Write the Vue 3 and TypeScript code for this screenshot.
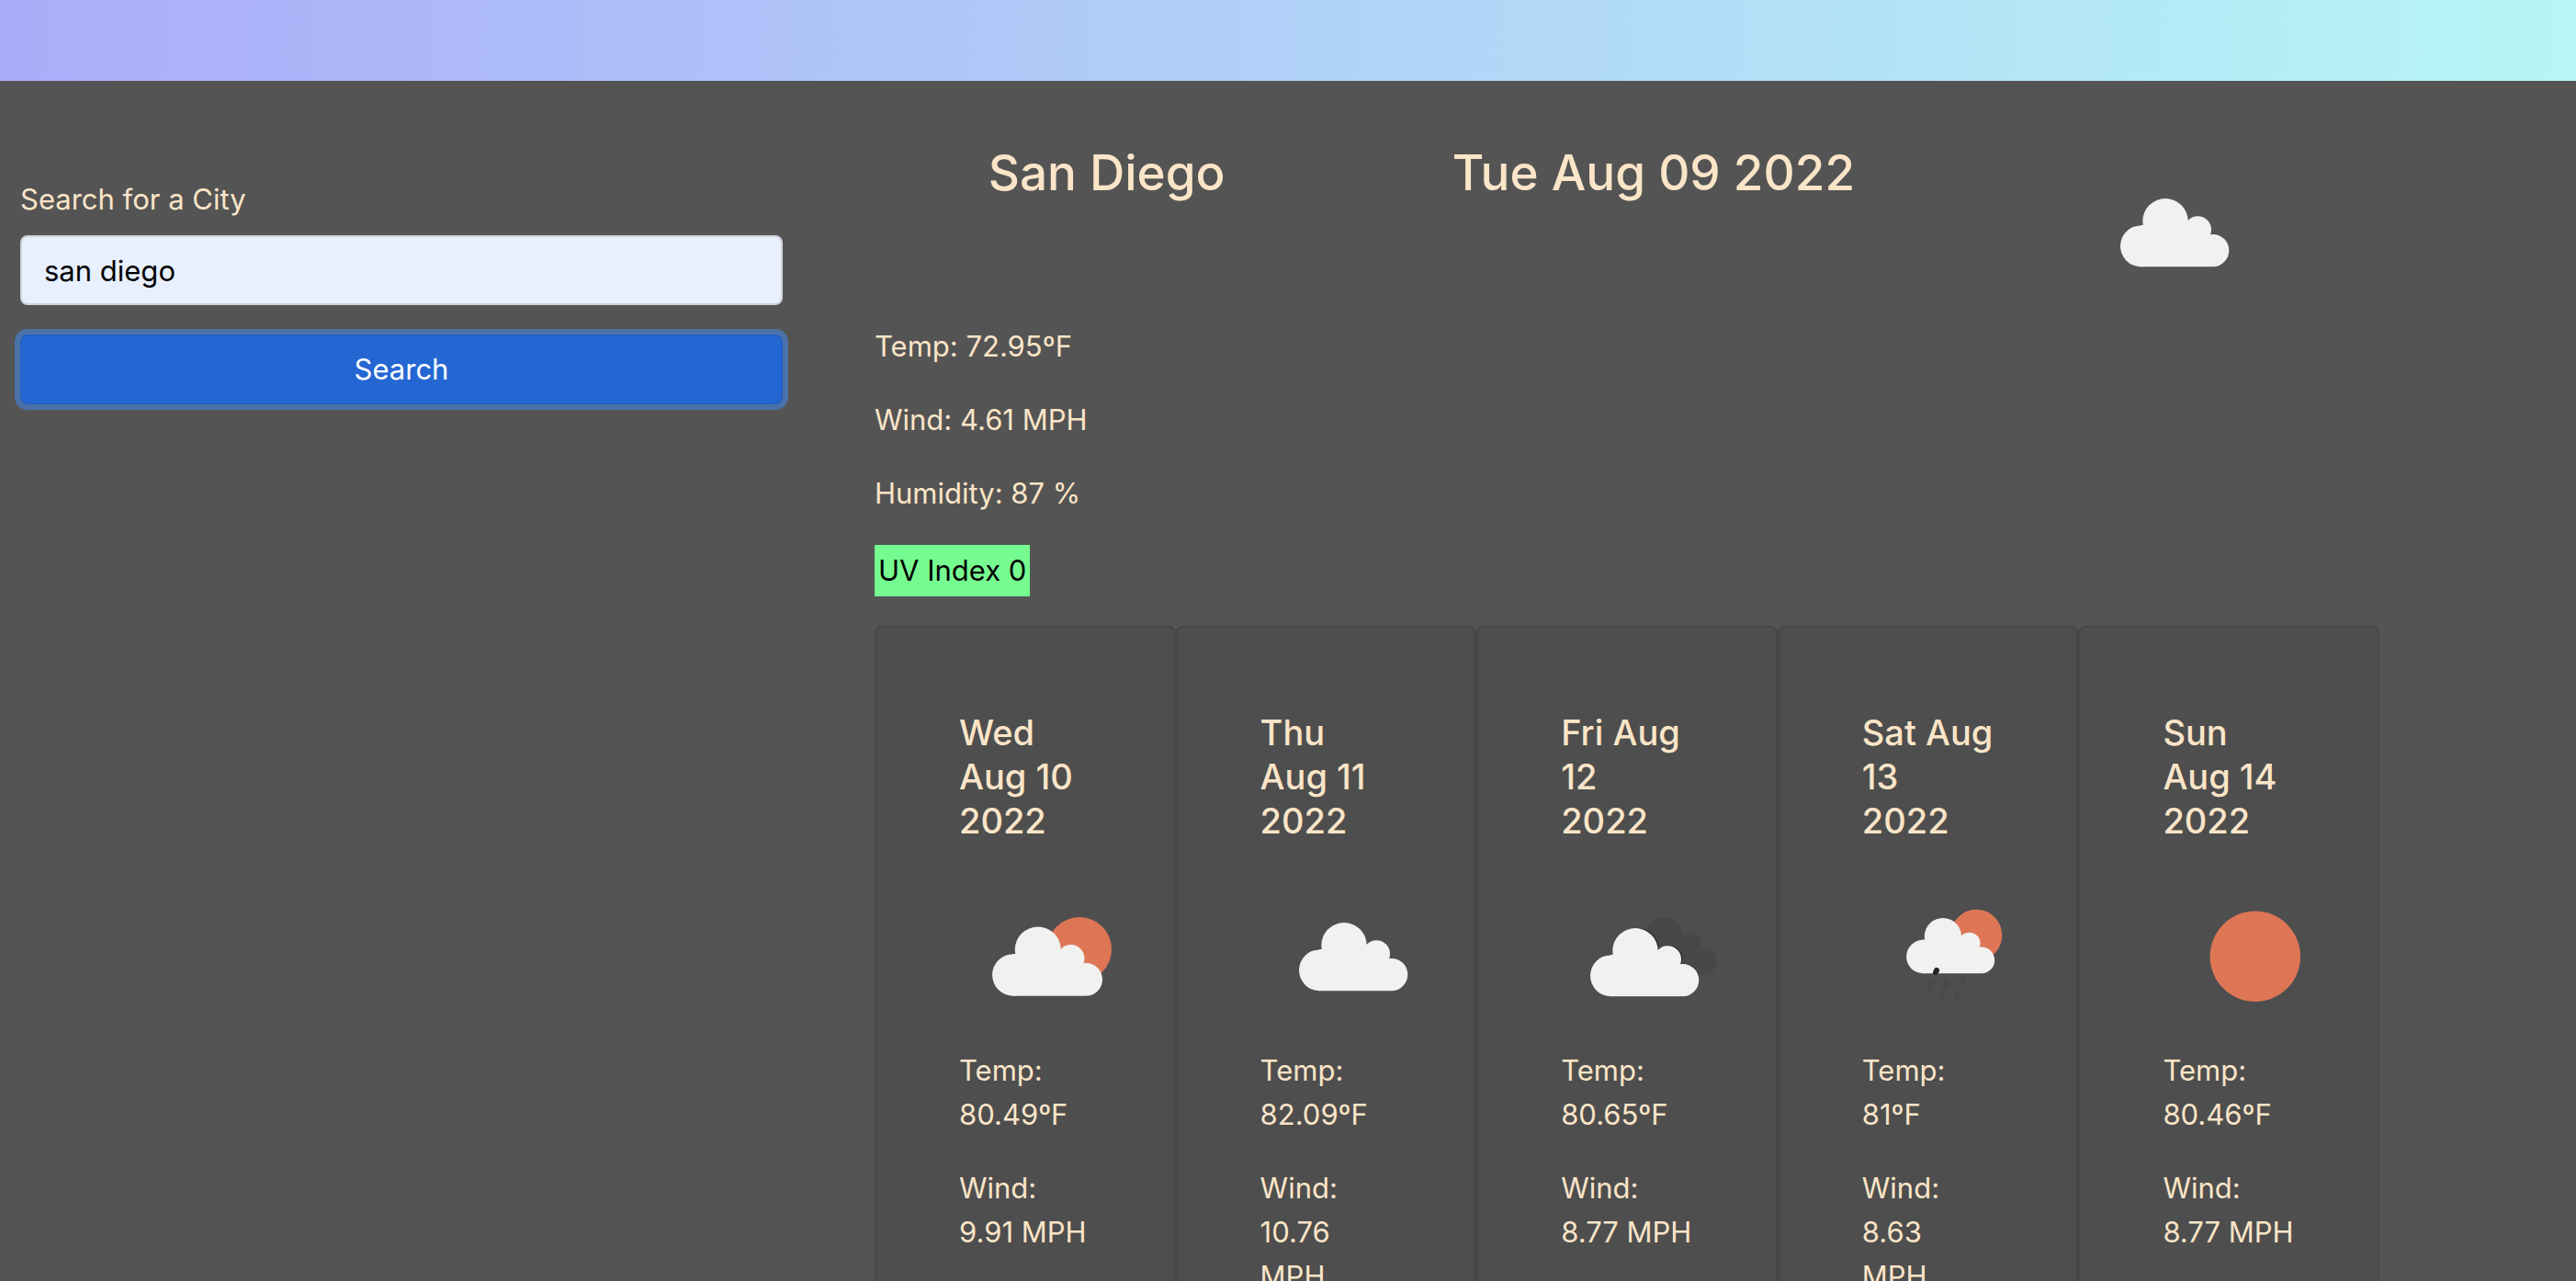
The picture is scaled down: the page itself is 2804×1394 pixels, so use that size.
<script setup lang="ts">
import { ref } from 'vue'

type Sky = 'few' | 'cloud' | 'broken' | 'rain' | 'sun'

interface Day {
  date: string
  sky: Sky
  temp: string
  wind: string
}

const city = ref('san diego')

const days: Day[] = [
  { date: 'Wed\nAug 10\n2022', sky: 'few', temp: '80.49ºF', wind: '9.91 MPH' },
  { date: 'Thu\nAug 11\n2022', sky: 'cloud', temp: '82.09ºF', wind: '10.76\nMPH' },
  { date: 'Fri Aug\n12\n2022', sky: 'broken', temp: '80.65ºF', wind: '8.77 MPH' },
  { date: 'Sat Aug\n13\n2022', sky: 'rain', temp: '81ºF', wind: '8.63\nMPH' },
  { date: 'Sun\nAug 14\n2022', sky: 'sun', temp: '80.46ºF', wind: '8.77 MPH' },
]
</script>

<template>
  <div class="page">
    <svg class="defs" aria-hidden="true">
      <symbol id="cloud" viewBox="0 0 200 200" overflow="visible">
        <circle cx="91" cy="87.7" r="24.7" />
        <circle cx="64.4" cy="114.8" r="22.4" />
        <circle cx="126.3" cy="97" r="14.7" />
        <circle cx="142.6" cy="119.6" r="17.7" />
        <path d="M64 92h40l22 0 14 20v25.3H64z" />
      </symbol>
    </svg>

    <header class="banner"></header>

    <div class="layout">
      <form class="search" @submit.prevent>
        <label for="city">Search for a City</label>
        <input id="city" v-model="city" type="text" autocomplete="off" />
        <button type="submit">Search</button>
      </form>

      <main class="weather">
        <section class="today">
          <h2>San Diego</h2>
          <h2>Tue Aug 09 2022</h2>
          <svg class="icon" viewBox="0 0 200 200" role="img" aria-label="Clouds">
            <use href="#cloud" width="200" height="200" fill="#f1f1f0" />
          </svg>
        </section>

        <p>Temp: 72.95ºF</p>
        <p>Wind: 4.61 MPH</p>
        <p>Humidity: 87 %</p>
        <p class="uv">UV Index 0</p>

        <section class="forecast">
          <article v-for="day in days" :key="day.date" class="card">
            <h3>{{ day.date }}</h3>

            <svg v-if="day.sky === 'few'" class="icon" viewBox="0 0 200 200" aria-hidden="true">
              <circle cx="131" cy="92" r="35" fill="#de7656" />
              <g transform="translate(-6.5 3.6) scale(1.014)">
                <use href="#cloud" width="200" height="200" fill="#f1f1f0" />
              </g>
            </svg>

            <svg v-else-if="day.sky === 'cloud'" class="icon" viewBox="0 0 200 200" aria-hidden="true">
              <use href="#cloud" width="200" height="200" fill="#f1f1f0" />
            </svg>

            <svg v-else-if="day.sky === 'broken'" class="icon" viewBox="0 0 200 200" aria-hidden="true">
              <g fill="#48484a">
                <circle cx="112.7" cy="77" r="20" />
                <circle cx="141" cy="86" r="12" />
                <circle cx="155" cy="105" r="15" />
                <path d="M112 80h30l13 12v27h-40z" />
              </g>
              <g transform="translate(-10 6)">
                <g transform="translate(2 -1)">
                  <circle cx="91" cy="87.7" r="24" fill="#2e2e30" />
                  <circle cx="126.3" cy="97" r="14" fill="#2e2e30" />
                  <circle cx="141.6" cy="119.6" r="17" fill="#2e2e30" />
                </g>
                <use href="#cloud" width="200" height="200" fill="#f1f1f0" />
              </g>
            </svg>

            <svg v-else-if="day.sky === 'rain'" class="icon" viewBox="0 0 200 200" aria-hidden="true">
              <circle cx="124.3" cy="76.7" r="28" fill="#de7656" />
              <g transform="translate(14 6.8) scale(.812)">
                <use href="#cloud" width="200" height="200" fill="#f1f1f0" />
              </g>
              <g stroke-width="6" stroke-linecap="round">
                <path d="M81 115l-1 2" stroke="#242527" />
                <path
                  d="M75 130l-2 5M92 128l-2 5M110.5 125l-1 2M87 143l-1 2M104 142l-1 3"
                  stroke="#48494a"
                />
              </g>
            </svg>

            <svg v-else class="icon" viewBox="0 0 200 200" aria-hidden="true">
              <circle cx="100.8" cy="99.8" r="49.2" fill="#de7656" />
            </svg>

            <p>Temp:<br />{{ day.temp }}</p>
            <p>Wind:<br />{{ day.wind }}</p>
          </article>
        </section>
      </main>
    </div>
  </div>
</template>

<style>
body {
  margin: 0;
  background: #545454;
}
</style>

<style scoped>
.page {
  height: 100vh;
  overflow: hidden;
  background: #545454;
  color: #fbe5c8;
  font-family: Inter, 'Liberation Sans', sans-serif;
  font-size: 31px;
  line-height: 48px;
}

.defs {
  position: absolute;
  width: 0;
  height: 0;
}

.banner {
  height: 88px;
  background: linear-gradient(90deg, #abacf9, #b6f6f6);
}

.layout {
  display: flex;
  gap: 100px;
  padding: 65px 214px 0 22px;
}

.search {
  display: flex;
  flex: 830 1 0;
  flex-direction: column;
  padding-top: 40px;
}

.search input,
.search button {
  box-sizing: border-box;
  width: 100%;
  height: 76px;
  border-radius: 8px;
  font: inherit;
}

.search input {
  margin: 15px 0 32px;
  padding: 12px 24px;
  border: 2px solid #ced4da;
  background: #e8effd;
  color: #000;
}

.search button {
  padding: 0;
  border: 2px solid #2460c6;
  background: #2567d2;
  box-shadow: 0 0 0 6px #4a72a9;
  color: #fff;
}

.weather {
  flex: 1638 1 0;
  min-width: 0;
}

.today {
  display: flex;
  justify-content: space-around;
}

.icon {
  display: block;
  flex: none;
  width: 200px;
  height: 200px;
}

h2,
h3 {
  margin: 0;
  font-weight: 500;
}

h2 {
  font-size: 53px;
  line-height: 70px;
}

h3 {
  margin-bottom: 24px;
  font-size: 38px;
  line-height: 48px;
  white-space: pre;
}

p {
  margin: 0 0 32px;
  white-space: pre-line;
}

.uv {
  width: fit-content;
  padding: 4px;
  background: #76fb91;
  color: #000;
}

.forecast {
  display: flex;
}

.card {
  flex: 1 1 0;
  min-width: 0;
  box-sizing: border-box;
  padding: 90px;
  border: 2px solid #464646;
  border-radius: 8px;
  background: #4e4e4e;
}

.card p {
  white-space: pre;
}
</style>
